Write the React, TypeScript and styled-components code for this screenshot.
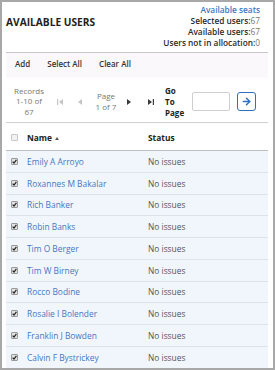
import React from "react";
import styled, { createGlobalStyle } from "styled-components";
import { ArrowRight } from "lucide-react";

const users = [
  "Emily A Arroyo",
  "Roxannes M Bakalar",
  "Rich Banker",
  "Robin Banks",
  "Tim O Berger",
  "Tim W Birney",
  "Rocco Bodine",
  "Rosalie I Bolender",
  "Franklin J Bowden",
  "Calvin F Bystrickey",
];

const PagerIcon = ({ dir, bar, off }: { dir: "l" | "r"; bar?: boolean; off?: boolean }) => {
  const c = off ? "#c4c4c4" : "#3a3a3a";
  return (
    <svg width={bar ? 6 : 4} height="6" viewBox={bar ? "0 0 6 6" : "0 0 4 6"}>
      {dir === "l" ? (
        <>
          {bar && <rect x="0" y="0" width="1.2" height="6" fill={c} />}
          <polygon points={bar ? "6,0 6,6 2,3" : "4,0 4,6 0,3"} fill={c} />
        </>
      ) : (
        <>
          <polygon points="0,0 0,6 4,3" fill={c} />
          {bar && <rect x="4.8" y="0" width="1.2" height="6" fill={c} />}
        </>
      )}
    </svg>
  );
};

const App = () => {
  return (
    <>
      <Global />
      <Frame>
        <Header>
          <Title>AVAILABLE USERS</Title>
          <Seats>
            <SeatsLink>Available seats</SeatsLink>
            <SeatLine>
              Selected users:<SeatValue>67</SeatValue>
            </SeatLine>
            <SeatLine>
              Available users:<SeatValue>67</SeatValue>
            </SeatLine>
            <SeatLine>
              Users not in allocation:<SeatValue>0</SeatValue>
            </SeatLine>
          </Seats>
        </Header>

        <Toolbar>
          <ToolButton>Add</ToolButton>
          <ToolButton>Select All</ToolButton>
          <ToolButton>Clear All</ToolButton>
        </Toolbar>

        <Pager>
          <PagerText>
            Records
            <br />
            1-10 of
            <br />
            67
          </PagerText>
          <PagerIcon dir="l" bar off />
          <PagerIcon dir="l" off />
          <PagerText>
            Page
            <br />1 of 7
          </PagerText>
          <PagerIcon dir="r" />
          <PagerIcon dir="r" bar />
          <GoLabel>
            Go
            <br />
            To
            <br />
            Page
          </GoLabel>
          <PageInput />
          <GoButton>
            <ArrowRight size={11} strokeWidth={3.2} />
          </GoButton>
        </Pager>

        <HeadRow>
          <Check />
          <HeadCell>
            Name
            <SortMark width="4" height="3" viewBox="0 0 4 3">
              <polygon points="0,3 4,3 2,0" fill="#555" />
            </SortMark>
          </HeadCell>
          <HeadCell>Status</HeadCell>
        </HeadRow>

        {users.map((u) => (
          <Row key={u}>
            <Check $checked>
              <svg width="5" height="5" viewBox="0 0 5 5">
                <polyline points="0.6,2.6 2,4 4.4,0.8" fill="none" stroke="#222" strokeWidth="1.2" />
              </svg>
            </Check>
            <NameLink>{u}</NameLink>
            <Status>No issues</Status>
          </Row>
        ))}
      </Frame>
    </>
  );
};

export default App;

const Global = createGlobalStyle`
  body {
    margin: 0;
    background: #fff;
    font-family: "Open Sans", "Noto Sans", sans-serif;
  }
`;

const Frame = styled.div`
  width: 275px;
  height: 370px;
  box-sizing: border-box;
  border: 2px solid #a8a8a8;
  padding: 0 5px 0 4px;
  overflow: hidden;
  background: #fff;
`;

const Header = styled.div`
  height: 50px;
  display: flex;
  justify-content: space-between;
  align-items: flex-start;
  border-bottom: 1px solid #c8c8c8;
`;

const Title = styled.div`
  margin-top: 13px;
  font-size: 10.2px;
  line-height: 14px;
  font-weight: 700;
  color: #1e1e1e;
`;

const Seats = styled.div`
  margin-top: 2px;
  padding-right: 8px;
  display: flex;
  flex-direction: column;
  align-items: flex-end;
  font-size: 8.3px;
  line-height: 11px;
  font-weight: 600;
  color: #2a2a2a;
`;

const SeatsLink = styled.div`
  color: #3b78c4;
`;

const SeatLine = styled.div``;

const SeatValue = styled.span`
  font-weight: 400;
  color: #777;
`;

const Toolbar = styled.div`
  height: 25px;
  display: flex;
  align-items: flex-start;
  gap: 17px;
  padding: 5px 0 0 9px;
  box-sizing: border-box;
  background: #fbf8fb;
`;

const ToolButton = styled.div`
  font-size: 8px;
  line-height: 11px;
  font-weight: 600;
  color: #333;
`;

const Pager = styled.div`
  height: 45px;
  box-sizing: border-box;
  padding-top: 3px;
  display: grid;
  grid-template-columns: 46px 16px 24px 28px 18px 26px 26px 43px 29px;
  align-items: center;
  justify-items: center;
  border-bottom: 1px solid #cfcfcf;
`;

const PagerText = styled.div`
  font-size: 8px;
  line-height: 10.5px;
  text-align: center;
  color: #777;
  white-space: nowrap;
`;

const GoLabel = styled.div`
  justify-self: start;
  padding-left: 1px;
  font-size: 8px;
  line-height: 11px;
  font-weight: 700;
  color: #222;
`;

const PageInput = styled.input`
  justify-self: start;
  margin-left: 2px;
  width: 38px;
  height: 19px;
  box-sizing: border-box;
  border: 1px solid #cfcfcf;
  border-radius: 2px;
  padding: 0;
  outline: none;
`;

const GoButton = styled.button`
  justify-self: start;
  margin-left: 4px;
  width: 19px;
  height: 19px;
  box-sizing: border-box;
  padding: 0;
  border: 1.5px solid #2f6fbe;
  border-radius: 3px;
  background: #fff;
  color: #2f6fbe;
  display: flex;
  align-items: center;
  justify-content: center;
`;

const HeadRow = styled.div`
  height: 28px;
  box-sizing: border-box;
  padding-top: 2px;
  display: grid;
  grid-template-columns: 21px 121px 1fr;
  align-items: center;
  border-bottom: 1px solid #bdbdbd;
`;

const HeadCell = styled.div`
  display: flex;
  align-items: center;
  font-size: 8.4px;
  font-weight: 700;
  color: #222;
`;

const SortMark = styled.svg`
  margin-left: 3px;
  margin-top: 2px;
`;

const Row = styled.div`
  height: 21.75px;
  box-sizing: border-box;
  display: grid;
  grid-template-columns: 21px 121px 1fr;
  align-items: center;
  background: #f1f6fd;
  border-bottom: 1px solid #dde3ea;
`;

const Check = styled.div<{ $checked?: boolean }>`
  margin-left: 5px;
  width: 7px;
  height: 7px;
  box-sizing: border-box;
  border: 1px solid ${(p) => (p.$checked ? "#9a9a9a" : "#c8c8c8")};
  border-radius: 1px;
  background: ${(p) => (p.$checked ? "#e2e2e2" : "#f2f2f2")};
  display: flex;
  align-items: center;
  justify-content: center;
`;

const NameLink = styled.div`
  font-size: 8.4px;
  color: #4677c0;
  white-space: nowrap;
`;

const Status = styled.div`
  font-size: 8.4px;
  color: #555;
`;
